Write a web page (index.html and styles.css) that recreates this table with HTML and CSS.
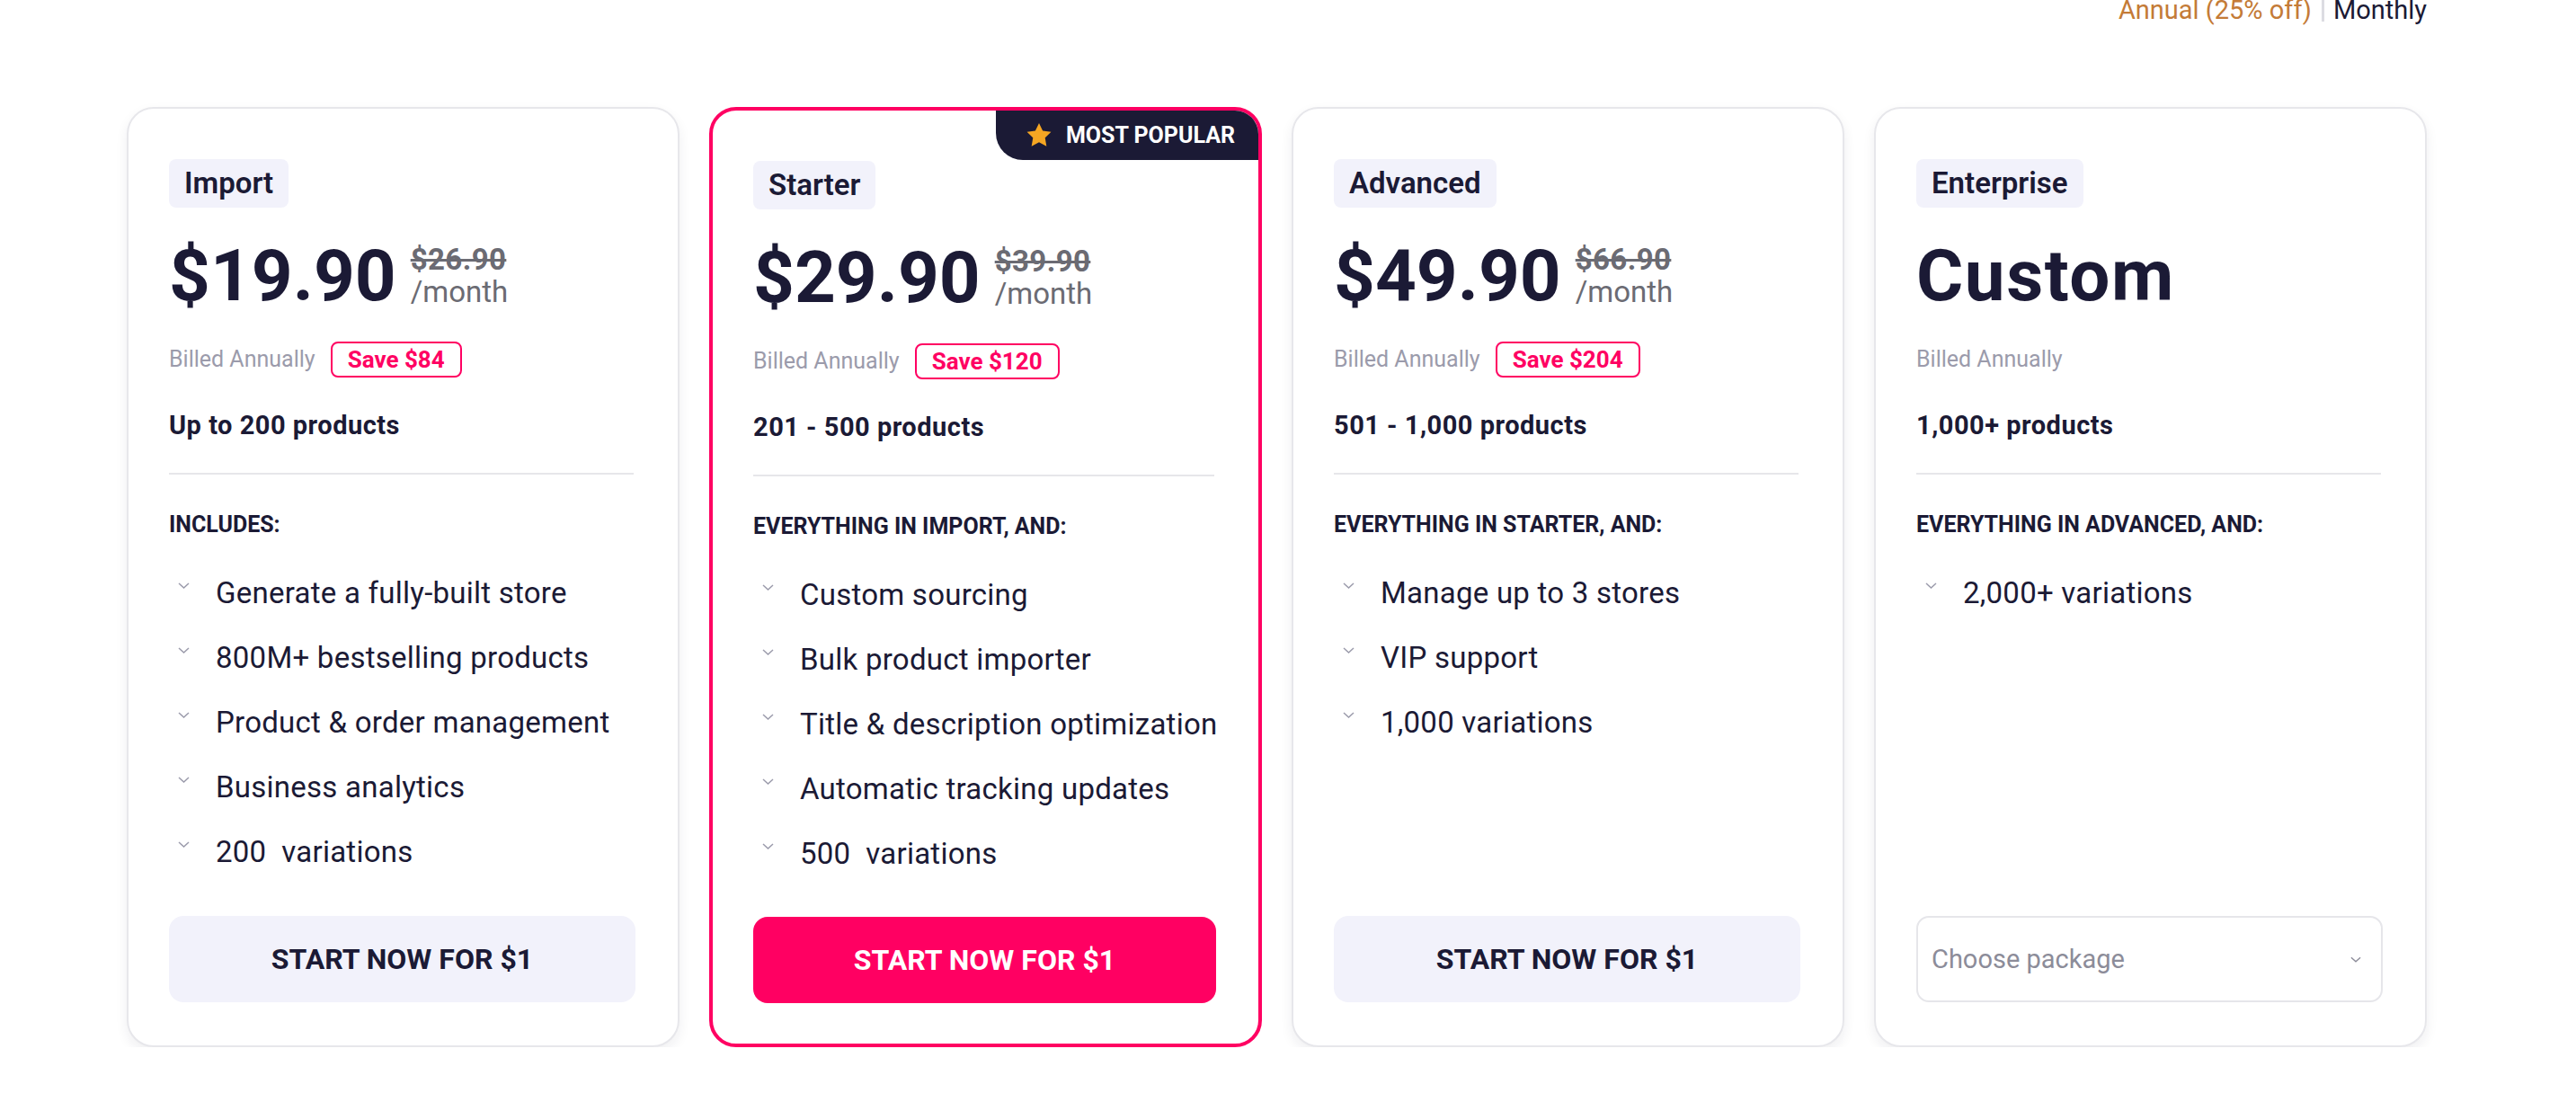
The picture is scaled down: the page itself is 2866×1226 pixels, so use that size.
FILE: index.html
```html
<!DOCTYPE html>
<html lang="en">
<head>
<meta charset="utf-8">
<title>Pricing</title>
<link rel="stylesheet" href="styles.css">
</head>
<body>
<div class="page">
  <div class="toggle">
    <span class="toggle-annual">Annual (25% off)</span>
    <span class="toggle-sep"></span>
    <span class="toggle-monthly">Monthly</span>
  </div>

  <div class="plans">
    <div class="card">
      <div class="tier">Import</div>
      <div class="price-row">
        <div class="price">$19.90</div>
        <div class="price-meta">
          <span class="old">$26.90</span>
          <span class="per">/month</span>
        </div>
      </div>
      <div class="billed-row">
        <span class="billed">Billed Annually</span>
        <span class="save">Save $84</span>
      </div>
      <div class="products">Up to 200 products</div>
      <div class="divider"></div>
      <div class="includes">INCLUDES:</div>
      <ul class="features">
        <li><svg class="chev" viewBox="0 0 13 7"><polyline points="1,1 6.5,6 12,1"/></svg><span>Generate a fully-built store</span></li>
        <li><svg class="chev" viewBox="0 0 13 7"><polyline points="1,1 6.5,6 12,1"/></svg><span>800M+ bestselling products</span></li>
        <li><svg class="chev" viewBox="0 0 13 7"><polyline points="1,1 6.5,6 12,1"/></svg><span>Product &amp; order management</span></li>
        <li><svg class="chev" viewBox="0 0 13 7"><polyline points="1,1 6.5,6 12,1"/></svg><span>Business analytics</span></li>
        <li><svg class="chev" viewBox="0 0 13 7"><polyline points="1,1 6.5,6 12,1"/></svg><span>200&nbsp; variations</span></li>
      </ul>
      <a class="cta">START NOW FOR $1</a>
    </div>

    <div class="card popular">
      <div class="tag">
        <svg class="star" viewBox="0 0 24 24"><path d="M12 1.5l3.2 6.6 7.2 1-5.2 5.1 1.25 7.2L12 18l-6.45 3.4 1.25-7.2L1.6 9.1l7.2-1z"/></svg>
        <span>MOST POPULAR</span>
      </div>
      <div class="tier">Starter</div>
      <div class="price-row">
        <div class="price">$29.90</div>
        <div class="price-meta">
          <span class="old">$39.90</span>
          <span class="per">/month</span>
        </div>
      </div>
      <div class="billed-row">
        <span class="billed">Billed Annually</span>
        <span class="save">Save $120</span>
      </div>
      <div class="products">201 - 500 products</div>
      <div class="divider"></div>
      <div class="includes">EVERYTHING IN IMPORT, AND:</div>
      <ul class="features">
        <li><svg class="chev" viewBox="0 0 13 7"><polyline points="1,1 6.5,6 12,1"/></svg><span>Custom sourcing</span></li>
        <li><svg class="chev" viewBox="0 0 13 7"><polyline points="1,1 6.5,6 12,1"/></svg><span>Bulk product importer</span></li>
        <li><svg class="chev" viewBox="0 0 13 7"><polyline points="1,1 6.5,6 12,1"/></svg><span>Title &amp; description optimization</span></li>
        <li><svg class="chev" viewBox="0 0 13 7"><polyline points="1,1 6.5,6 12,1"/></svg><span>Automatic tracking updates</span></li>
        <li><svg class="chev" viewBox="0 0 13 7"><polyline points="1,1 6.5,6 12,1"/></svg><span>500&nbsp; variations</span></li>
      </ul>
      <a class="cta cta-primary">START NOW FOR $1</a>
    </div>

    <div class="card">
      <div class="tier">Advanced</div>
      <div class="price-row">
        <div class="price">$49.90</div>
        <div class="price-meta">
          <span class="old">$66.90</span>
          <span class="per">/month</span>
        </div>
      </div>
      <div class="billed-row">
        <span class="billed">Billed Annually</span>
        <span class="save">Save $204</span>
      </div>
      <div class="products">501 - 1,000 products</div>
      <div class="divider"></div>
      <div class="includes">EVERYTHING IN STARTER, AND:</div>
      <ul class="features">
        <li><svg class="chev" viewBox="0 0 13 7"><polyline points="1,1 6.5,6 12,1"/></svg><span>Manage up to 3 stores</span></li>
        <li><svg class="chev" viewBox="0 0 13 7"><polyline points="1,1 6.5,6 12,1"/></svg><span>VIP support</span></li>
        <li><svg class="chev" viewBox="0 0 13 7"><polyline points="1,1 6.5,6 12,1"/></svg><span>1,000 variations</span></li>
      </ul>
      <a class="cta">START NOW FOR $1</a>
    </div>

    <div class="card">
      <div class="tier">Enterprise</div>
      <div class="price-row">
        <div class="price price-custom">Custom</div>
      </div>
      <div class="billed-row">
        <span class="billed">Billed Annually</span>
      </div>
      <div class="products">1,000+ products</div>
      <div class="divider"></div>
      <div class="includes">EVERYTHING IN ADVANCED, AND:</div>
      <ul class="features">
        <li><svg class="chev" viewBox="0 0 13 7"><polyline points="1,1 6.5,6 12,1"/></svg><span>2,000+ variations</span></li>
      </ul>
      <div class="select">
        <span>Choose package</span>
        <svg class="select-chev" viewBox="0 0 13 7"><polyline points="1,1 6.5,6 12,1"/></svg>
      </div>
    </div>
  </div>
</div>
</body>
</html>
```

FILE: styles.css
```css
* { box-sizing: border-box; }

body {
  margin: 0;
  background: #ffffff;
  font-family: Roboto, "Liberation Sans", Arial, sans-serif;
  color: #1b1a35;
}

.page {
  width: 2559px;
  margin-left: 141px;
}

.toggle {
  display: flex;
  justify-content: flex-end;
  align-items: center;
  margin-top: -6px;
  height: 34px;
  font-size: 29px;
  line-height: 34px;
}

.toggle-annual { color: #c47b37; }
.toggle-monthly { color: #1b1a35; }

.toggle-sep {
  width: 3px;
  height: 26px;
  background: #dcdce2;
  margin: 0 10px 0 11px;
}

.plans {
  display: grid;
  grid-template-columns: repeat(4, 615px);
  column-gap: 33px;
  margin-top: 91px;
  align-items: stretch;
}

.card {
  position: relative;
  display: flex;
  flex-direction: column;
  background: #ffffff;
  border: 2px solid #e7e7eb;
  border-radius: 30px;
  padding: 56px 47px 48px 45px;
  box-shadow: 0 6px 14px rgba(27, 26, 53, 0.07);
}

.card.popular {
  border: 4px solid #ff0062;
  padding-bottom: 45px;
  box-shadow: none;
}

.tag {
  position: absolute;
  top: 0;
  right: 0;
  height: 55px;
  display: flex;
  align-items: center;
  gap: 14px;
  padding: 0 26px 0 32px;
  background: #1b1a35;
  color: #ffffff;
  font-weight: 700;
  font-size: 25px;
  border-radius: 0 26px 0 30px;
}

.star {
  width: 32px;
  height: 31px;
  fill: #f6a623;
}

.tier {
  align-self: flex-start;
  background: #f2f2fb;
  border-radius: 8px;
  padding: 7px 17px;
  font-size: 33px;
  line-height: 40px;
  font-weight: 600;
}

.price-row {
  display: flex;
  align-items: flex-start;
  gap: 16px;
  margin-top: 36px;
  height: 80px;
}

.price {
  font-size: 80px;
  line-height: 80px;
  font-weight: 700;
}

.price-custom {
  letter-spacing: 1.5px;
}

.price-meta {
  display: flex;
  flex-direction: column;
  margin-top: 4px;
  color: #6b6b73;
}

.old {
  font-size: 33px;
  line-height: 36px;
  font-weight: 700;
  letter-spacing: 0.4px;
  text-decoration: line-through;
  text-decoration-thickness: 3px;
}

.per {
  font-size: 33px;
  line-height: 36px;
}

.billed-row {
  display: flex;
  align-items: center;
  gap: 17px;
  margin-top: 33px;
  min-height: 40px;
}

.billed {
  font-size: 25px;
  line-height: 30px;
  color: #9b9bab;
}

.save {
  font-size: 26px;
  line-height: 32px;
  font-weight: 700;
  color: #ff0062;
  border: 2px solid #ff0062;
  border-radius: 8px;
  padding: 2px 17px;
}

.products {
  margin-top: 36px;
  font-size: 29px;
  line-height: 34px;
  font-weight: 700;
  letter-spacing: 0.5px;
}

.divider {
  height: 2px;
  background: #e6e6ea;
  margin-top: 36px;
  margin-right: 2px;
}

.includes {
  margin-top: 41px;
  font-size: 25px;
  line-height: 30px;
  font-weight: 700;
}

.features {
  list-style: none;
  margin: 41px 0 50px;
  padding: 0;
}

.features li {
  display: flex;
  align-items: flex-start;
  font-size: 33px;
  line-height: 40px;
  letter-spacing: 0.25px;
  margin-bottom: 32px;
  white-space: nowrap;
}

.features li:last-child { margin-bottom: 0; }

.chev {
  flex: none;
  width: 13px;
  height: 7px;
  margin: 8px 29px 0 10px;
  fill: none;
  stroke: #9b9bab;
  stroke-width: 1.5;
}

.cta {
  margin-top: auto;
  height: 96px;
  border-radius: 16px;
  background: #f2f2fb;
  color: #1b1a35;
  display: flex;
  align-items: center;
  justify-content: center;
  font-size: 32px;
  font-weight: 700;
}

.cta-primary {
  background: #ff0062;
  color: #ffffff;
}

.select {
  margin-top: auto;
  height: 96px;
  border: 2px solid #e6e6ea;
  border-radius: 14px;
  display: flex;
  align-items: center;
  justify-content: space-between;
  padding: 0 22px 0 15px;
  font-size: 29px;
  color: #8c8c99;
}

.select-chev {
  width: 12px;
  height: 7px;
  fill: none;
  stroke: #8c8c99;
  stroke-width: 1.5;
}
```
